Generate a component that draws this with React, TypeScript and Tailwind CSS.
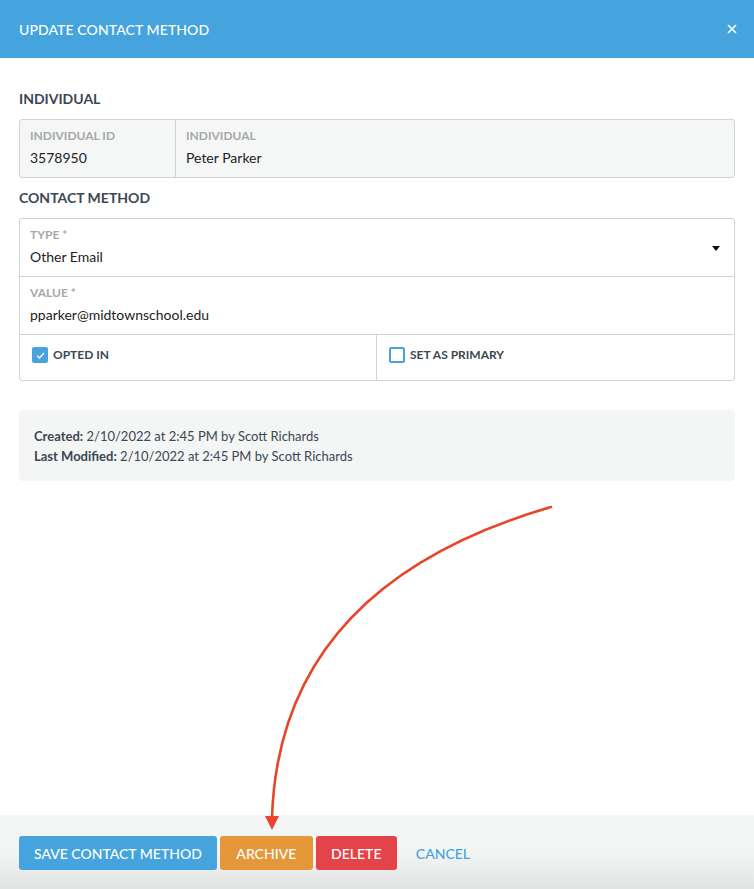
import React from "react";

const font = { fontFamily: "Lato, 'Open Sans', Arial, sans-serif" };

function Field({ label, value, right }: { label: string; value: string; right?: React.ReactNode }) {
  return (
    <div className="flex items-center justify-between pl-[10px] pr-[14px] pt-[8px] pb-[9px]">
      <div className="flex flex-col gap-[4px]">
        <div className="text-[12px] leading-[16px] font-bold text-[#a8a8a8] uppercase">{label}</div>
        <div className="text-[14px] leading-[20px] text-[#222]">{value}</div>
      </div>
      {right}
    </div>
  );
}

function Check({ checked, label }: { checked: boolean; label: string }) {
  return (
    <div className="flex items-start gap-[5px] pl-[12px] pt-[12px] pb-[17px]">
      {checked ? (
        <div className="w-[16px] h-[16px] rounded-[2px] bg-[#48a2dc] flex items-center justify-center">
          <svg width="9" height="7" viewBox="0 0 9 7">
            <path d="M1 3.6 L3.4 6 L8 1" stroke="white" strokeWidth="1.3" fill="none" />
          </svg>
        </div>
      ) : (
        <div className="w-[16px] h-[16px] rounded-[2px] border-[2px] border-[#48a2dc] bg-white" />
      )}
      <div className="text-[12px] leading-[16px] font-bold text-[#3b4753] uppercase">{label}</div>
    </div>
  );
}

export default function App() {
  return (
    <div className="relative w-[754px] h-[889px] bg-white flex flex-col overflow-hidden" style={font}>
      <div className="h-[58px] bg-[#45a3de] flex items-center justify-between pl-[19px] pr-[17px] shrink-0">
        <div className="text-white text-[14px] font-medium tracking-[0.1px]">UPDATE CONTACT METHOD</div>
        <svg width="10" height="10" viewBox="0 0 10 10">
          <path d="M1 1 L9 9 M9 1 L1 9" stroke="white" strokeWidth="1.6" />
        </svg>
      </div>

      <div className="flex-1 px-[19px] pt-[31px]">
        <div className="text-[14px] leading-[20px] font-bold text-[#3b4753]">INDIVIDUAL</div>
        <div className="mt-[10px] border border-[#d2d2d2] rounded-[3px] bg-[#f5f6f6] flex">
          <div className="w-[156px] border-r border-[#d2d2d2]">
            <Field label="Individual ID" value="3578950" />
          </div>
          <div className="flex-1">
            <Field label="Individual" value="Peter Parker" />
          </div>
        </div>

        <div className="mt-[10px] text-[14px] leading-[20px] font-bold text-[#3b4753]">CONTACT METHOD</div>
        <div className="mt-[10px] border border-[#d2d2d2] rounded-[3px] bg-white">
          <div className="border-b border-[#d2d2d2]">
            <Field
              label="Type *"
              value="Other Email"
              right={
                <svg width="8" height="5" viewBox="0 0 8 5" className="mt-[3px]">
                  <path d="M0 0 L8 0 L4 5 Z" fill="#111" />
                </svg>
              }
            />
          </div>
          <div className="border-b border-[#d2d2d2]">
            <Field label="Value *" value="pparker@midtownschool.edu" />
          </div>
          <div className="flex">
            <div className="w-[357px] border-r border-[#d2d2d2]">
              <Check checked label="Opted In" />
            </div>
            <div className="flex-1">
              <Check checked={false} label="Set as Primary" />
            </div>
          </div>
        </div>

        <div className="mt-[29px] rounded-[4px] bg-[#f4f5f5] px-[15px] pt-[16px] pb-[15px] text-[13px] leading-[20px] text-[#3b4753]">
          <div>
            <span className="font-bold">Created:</span> 2/10/2022 at 2:45 PM by Scott Richards
          </div>
          <div>
            <span className="font-bold">Last Modified:</span> 2/10/2022 at 2:45 PM by Scott Richards
          </div>
        </div>
      </div>

      <div className="h-[74px] shrink-0 bg-gradient-to-b from-[#f4f6f6] via-[#f3f5f5] to-[#e2e4e4] px-[19px] pt-[21px] flex items-start gap-[3px]">
        <button className="h-[34px] px-[15px] rounded-[3px] bg-[#45a3de] text-white text-[14px] font-medium">SAVE CONTACT METHOD</button>
        <button className="h-[34px] w-[93px] rounded-[3px] bg-[#e6973a] text-white text-[14px] font-medium">ARCHIVE</button>
        <button className="h-[34px] w-[81px] rounded-[3px] bg-[#e2444a] text-white text-[14px] font-medium">DELETE</button>
        <button className="h-[34px] ml-[16px] text-[#45a3de] text-[14px] font-medium">CANCEL</button>
      </div>

      <svg className="absolute left-0 top-0 pointer-events-none" width="754" height="889" viewBox="0 0 754 889">
        <path d="M551 507 C 420 545 278 625 272 818" stroke="#e8462a" strokeWidth="2.6" fill="none" strokeLinecap="round" />
        <path d="M265 816 L279 816 L272 830 Z" fill="#e8462a" />
      </svg>
    </div>
  );
}
